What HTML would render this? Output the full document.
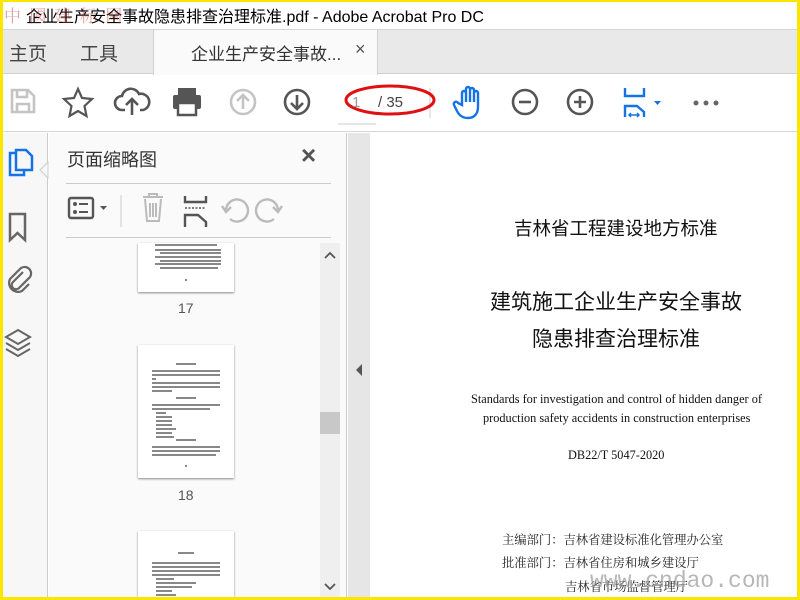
<!DOCTYPE html>
<html><head><meta charset="utf-8"><style>
*{margin:0;padding:0;box-sizing:border-box}
body{width:800px;height:600px;overflow:hidden;position:relative;background:#fff;font-family:"Liberation Sans","Noto Sans CJK SC",sans-serif}
.a{position:absolute}
.yl{background:#fce600;position:absolute}
.cn{font-family:"Liberation Sans","Noto Sans CJK SC",sans-serif}
.sf{font-family:"Liberation Serif","Noto Serif CJK SC",serif}
.b{position:absolute;background:#555;height:1.5px;opacity:.7}
</style></head><body>
<div class="a" style="left:0;top:0;width:800px;height:30px;background:#fff;border-bottom:1px solid #d6d6d6"></div>
<div class="a" style="left:26px;top:3px;font-size:16px;color:#000;white-space:nowrap">企业生产安全事故隐患排查治理标准.pdf - Adobe Acrobat Pro DC</div>
<div class="a" style="left:4px;top:2px;font-size:17px;color:#b33;opacity:.45;white-space:nowrap;letter-spacing:2px;font-family:'Noto Serif CJK SC',serif">中 國 建 标 网</div>
<div class="a" style="left:0;top:30px;width:800px;height:44px;background:#e9e9e9;border-bottom:1px solid #d0d0d0"></div>
<div class="a" style="left:153px;top:30px;width:225px;height:45px;background:#fafafa;border-left:1px solid #d0d0d0;border-right:1px solid #d0d0d0"></div>
<div class="a" style="left:9px;top:39px;font-size:19px;color:#444">主页</div>
<div class="a" style="left:80px;top:39px;font-size:19px;color:#444">工具</div>
<div class="a" style="left:191px;top:40px;font-size:17px;color:#333">企业生产安全事故...</div>
<div class="a" style="left:355px;top:39px;font-size:18px;color:#555">×</div>
<div class="a" style="left:0;top:75px;width:800px;height:57px;background:#fff;border-bottom:1px solid #d6d6d6"></div>
<svg class="a" style="left:0;top:75px" width="800" height="57" fill="none" stroke-width="2.6">
<g stroke="#c4c4c4"><path d="M12 15h16l6 6v16H12z"/><path d="M17 15v7h10v-7M17 37v-8h12v8"/></g>
<path stroke="#555" d="M78 14l4 9 10 1-7.5 7 2 10-8.5-5-8.5 5 2-10-7.5-7 10-1z" stroke-width="2.2"/>
<g stroke="#555"><path d="M125 35h-3a7 7 0 0 1 0-14 9 9 0 0 1 17-2 7 7 0 0 1 4 16h-3"/><path d="M132 40V24M126 30l6-6 6 6"/></g>
<g fill="#555" stroke="none"><rect x="178" y="13" width="18" height="7"/><rect x="173" y="20" width="28" height="14" rx="2"/><rect x="178" y="28" width="18" height="12" fill="#fff" stroke="#555" stroke-width="2.5"/></g>
<g stroke="#c4c4c4"><circle cx="243" cy="27" r="12"/><path d="M243 34V20M237 26l6-6 6 6"/></g>
<g stroke="#555"><circle cx="297" cy="27" r="12"/><path d="M297 20v14M291 28l6 6 6-6"/></g>
<path stroke="#ccc" stroke-width="1" d="M338 49h38M430 13v30"/>
<g stroke="#1473e6" stroke-width="2.4"><path d="M462 30V18a2 2 0 0 1 4 0v9V14a2 2 0 0 1 4 0v13V15a2 2 0 0 1 4 0v12v-9a2 2 0 0 1 4 0v14c0 7-4 11-10 11s-9-3-11-7l-3-6a2 2 0 0 1 4-2z"/></g>
<g stroke="#555"><circle cx="525" cy="27" r="12"/><path d="M519 27h12"/></g>
<g stroke="#555"><circle cx="580" cy="27" r="12"/><path d="M574 27h12M580 21v12"/></g>
<g stroke="#1473e6" stroke-width="2.4"><path d="M625 13v8h19v-8M625 42V31h12l7 6v5"/><path d="M629 40h10M631 38l-2 2 2 2M637 38l2 2-2 2" stroke-width="1.5"/></g>
<path d="M654 26h7l-3.5 4z" fill="#1473e6" stroke="none"/>
<g fill="#666" stroke="none"><circle cx="696" cy="28" r="2.5"/><circle cx="706" cy="28" r="2.5"/><circle cx="716" cy="28" r="2.5"/></g>
<ellipse cx="390" cy="25" rx="44" ry="14" stroke="#e01010" stroke-width="3"/>
</svg>
<div class="a" style="left:352px;top:94px;font-size:15px;color:#999">1</div>
<div class="a" style="left:378px;top:94px;font-size:15px;color:#444">/ 35</div>
<div class="a" style="left:0;top:133px;width:48px;height:467px;background:#f7f7f7;border-right:1px solid #ccc"></div>
<svg class="a" style="left:0;top:133px" width="60" height="240" fill="none" stroke-width="2.5">
<g stroke="#1473e6"><path d="M16 20h-6v22h14v-5"/><path d="M16 17h10l6 6v14H16z"/></g>
<path d="M40 37l8-8v16z" fill="#f7f7f7" stroke="#ccc" stroke-width="1"/>
<path stroke="#666" d="M10 81h15v26l-7.5-7-7.5 7z"/>
<path stroke="#666" d="M23 139l-10 10a4 4 0 0 0 6 6l11-11a6.5 6.5 0 0 0-9-9l-11 11a9 9 0 0 0 12 12l7-7" stroke-width="2.2"/>
<g stroke="#666" stroke-width="2"><path d="M18 197l12 7-12 7-12-7z"/><path d="M6 210l12 7 12-7M6 216l12 7 12-7"/></g>
</svg>
<div class="a" style="left:49px;top:133px;width:298px;height:467px;background:#fafafa;border-right:1px solid #ccc"></div>
<div class="a" style="left:67px;top:146px;font-size:18px;color:#333">页面缩略图</div>
<div class="a" style="left:301px;top:140px;font-size:26px;color:#555;font-weight:bold">×</div>
<div class="a" style="left:66px;top:183px;width:265px;height:1px;background:#ccc"></div>
<div class="a" style="left:66px;top:237px;width:265px;height:1px;background:#ccc"></div>
<svg class="a" style="left:60px;top:186px" width="240" height="50" fill="none" stroke-width="2.4">
<rect x="9" y="12" width="24" height="20" rx="2" stroke="#555"/>
<g fill="#555" stroke="none"><circle cx="15" cy="18" r="2"/><circle cx="15" cy="26" r="2"/><rect x="19" y="17" width="9" height="2"/><rect x="19" y="25" width="9" height="2"/><path d="M40 20h7l-3.5 4z"/></g>
<path d="M61 9v32" stroke="#ccc" stroke-width="1"/>
<g stroke="#bbb"><path d="M83 11h20M89 11V8h8v3M85 13l2 22h12l2-22M90 17v14M93 17v14M96 17v14" stroke-width="2"/></g>
<g stroke="#555"><path d="M125 10v6h21v-6M125 41V29h13l8 7v5"/><path d="M125 22h21" stroke-dasharray="2 1.5" stroke-width="1.5"/></g>
<g stroke="#bbb"><path d="M170 33a11 11 0 1 0-4-9"/><path d="M162 20l4 6 5-5" /></g>
<g stroke="#bbb"><path d="M214 33a11 11 0 1 1 4-9"/><path d="M222 20l-4 6-5-5"/></g>
</svg>
<div class="a" style="left:320px;top:243px;width:20px;height:357px;background:#efefef"></div>
<div class="a" style="left:320px;top:412px;width:20px;height:22px;background:#c8c8c8"></div>
<svg class="a" style="left:320px;top:243px" width="20" height="357" fill="none" stroke="#555" stroke-width="1.8"><path d="M5 15l5-5 5 5M5 341l5 5 5-5"/></svg>
<div class="a" style="left:138px;top:243px;width:96px;height:49px;background:#fff;box-shadow:0 1px 2px #888"></div>
<div class="b" style="left:155px;top:244px;width:62px"></div>
<div class="b" style="left:155px;top:249px;width:66px"></div>
<div class="b" style="left:160px;top:252px;width:61px"></div>
<div class="b" style="left:155px;top:256px;width:66px"></div>
<div class="b" style="left:160px;top:260px;width:61px"></div>
<div class="b" style="left:155px;top:263px;width:66px"></div>
<div class="b" style="left:160px;top:267px;width:58px"></div>
<div class="b" style="left:185px;top:279px;width:2px"></div>
<div class="a" style="left:178px;top:300px;font-size:14px;color:#555">17</div>
<div class="a" style="left:138px;top:345px;width:96px;height:133px;background:#fff;box-shadow:0 1px 2px #888"></div>
<div class="b" style="left:176px;top:363px;width:20px"></div>
<div class="b" style="left:152px;top:370px;width:68px"></div>
<div class="b" style="left:152px;top:374px;width:68px"></div>
<div class="b" style="left:152px;top:378px;width:4px"></div>
<div class="b" style="left:152px;top:382px;width:68px"></div>
<div class="b" style="left:152px;top:386px;width:68px"></div>
<div class="b" style="left:152px;top:390px;width:20px"></div>
<div class="b" style="left:176px;top:397px;width:20px"></div>
<div class="b" style="left:152px;top:404px;width:68px"></div>
<div class="b" style="left:152px;top:408px;width:58px"></div>
<div class="b" style="left:156px;top:412px;width:10px"></div>
<div class="b" style="left:156px;top:416px;width:16px"></div>
<div class="b" style="left:156px;top:420px;width:16px"></div>
<div class="b" style="left:156px;top:424px;width:16px"></div>
<div class="b" style="left:156px;top:428px;width:20px"></div>
<div class="b" style="left:156px;top:432px;width:16px"></div>
<div class="b" style="left:156px;top:436px;width:18px"></div>
<div class="b" style="left:176px;top:439px;width:20px"></div>
<div class="b" style="left:152px;top:446px;width:68px"></div>
<div class="b" style="left:152px;top:450px;width:68px"></div>
<div class="b" style="left:152px;top:454px;width:64px"></div>
<div class="b" style="left:185px;top:465px;width:2px"></div>
<div class="a" style="left:178px;top:487px;font-size:14px;color:#555">18</div>
<div class="a" style="left:138px;top:531px;width:96px;height:69px;background:#fff;box-shadow:0 1px 2px #888"></div>
<div class="b" style="left:178px;top:552px;width:16px"></div>
<div class="b" style="left:152px;top:562px;width:68px"></div>
<div class="b" style="left:152px;top:566px;width:68px"></div>
<div class="b" style="left:152px;top:570px;width:68px"></div>
<div class="b" style="left:152px;top:574px;width:68px"></div>
<div class="b" style="left:156px;top:578px;width:18px"></div>
<div class="b" style="left:156px;top:582px;width:40px"></div>
<div class="b" style="left:156px;top:586px;width:36px"></div>
<div class="b" style="left:156px;top:590px;width:16px"></div>
<div class="b" style="left:156px;top:594px;width:20px"></div>
<div class="a" style="left:348px;top:133px;width:22px;height:467px;background:#e6e6e6"></div>
<svg class="a" style="left:354px;top:362px" width="10" height="16"><path d="M2 8l6-6v12z" fill="#555"/></svg>
<div class="a cn" style="left:514px;top:215px;font-size:18.5px;color:#111;white-space:nowrap">吉林省工程建设地方标准</div>
<div class="a cn" style="left:490px;top:286px;font-size:21px;color:#111;white-space:nowrap">建筑施工企业生产安全事故</div>
<div class="a cn" style="left:532px;top:323px;font-size:21px;color:#111;white-space:nowrap">隐患排查治理标准</div>
<div class="a sf" style="left:471px;top:392px;font-size:12.3px;color:#111;white-space:nowrap">Standards for investigation and control of hidden danger of</div>
<div class="a sf" style="left:483px;top:411px;font-size:12.3px;color:#111;white-space:nowrap">production safety accidents in construction enterprises</div>
<div class="a sf" style="left:568px;top:448px;font-size:12.3px;color:#111;white-space:nowrap">DB22/T 5047-2020</div>
<div class="a sf" style="left:502px;top:530px;font-size:12.3px;color:#222;white-space:nowrap">主编部门：吉林省建设标准化管理办公室</div>
<div class="a sf" style="left:502px;top:553px;font-size:12.3px;color:#222;white-space:nowrap">批准部门：吉林省住房和城乡建设厅</div>
<div class="a sf" style="left:565px;top:577px;font-size:12.3px;color:#222;white-space:nowrap">吉林省市场监督管理厅</div>
<div class="a" style="left:590px;top:568px;width:200px;overflow:hidden;font-size:23px;color:#999;opacity:.7;font-family:'Liberation Mono',monospace;white-space:nowrap">www.cndao.com</div>
<div class="yl" style="left:0;top:0;width:3px;height:600px"></div>
<div class="yl" style="left:0;top:0;width:800px;height:2px"></div>
<div class="yl" style="right:0;top:0;width:3px;height:600px"></div>
<div class="yl" style="left:0;bottom:0;width:800px;height:3px"></div>
</body></html>
